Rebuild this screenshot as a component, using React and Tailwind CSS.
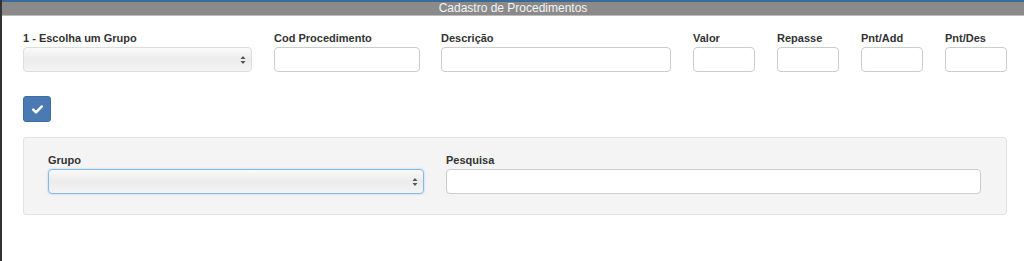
import React from 'react';

const Field = ({ label, width, select }) => (
  <div className="flex flex-col">
    <label className={`${width} text-[11px] font-bold text-[#333] leading-none mb-[3px] h-[11px]`}>{label}</label>
    {select ? <SelectBox className={width} /> : <div className={`${width} h-[25px] bg-white border border-[#ccc] rounded-[4px]`} />}
  </div>
);

const SelectBox = ({ className, focus }) => (
  <div
    className={`${className} h-[25px] rounded-[4px] border ${focus ? 'border-[#8ab8e6] shadow-[0_0_2px_rgba(102,175,233,0.6)]' : 'border-[#ddd]'} bg-gradient-to-b from-[#fafafa] via-[#ececec] to-[#f4f4f4] flex items-center justify-end pr-[5px]`}
  >
    <svg width="6" height="10" viewBox="0 0 6 10">
      <path d="M3 1 L5.5 4 H0.5 Z" fill="#555" />
      <path d="M3 9 L5.5 6 H0.5 Z" fill="#555" />
    </svg>
  </div>
);

export default function App() {
  return (
    <div className="w-[1024px] h-[261px] bg-white border-l-2 border-[#333] font-['Liberation_Sans',Arial,sans-serif] overflow-hidden">
      {/* barra de título */}
      <div className="h-[2px] bg-[#3b6a98]" />
      <div className="h-[14px] bg-[#8a8a8a] border-b border-[#bdbdbd] text-[12px] leading-[13px] text-[#f4f4f4] text-center">
        Cadastro de Procedimentos
      </div>

      <div className="pl-[21px] pt-[17px]">
        <div className="flex gap-[22px]">
          <Field label="1 - Escolha um Grupo" width="w-[229px]" select />
          <Field label="Cod Procedimento" width="w-[146px]" />
          <div className="ml-[-1px]">
            <Field label="Descrição" width="w-[230px]" />
          </div>
          <Field label="Valor" width="w-[62px]" />
          <Field label="Repasse" width="w-[62px]" />
          <Field label="Pnt/Add" width="w-[62px]" />
          <Field label="Pnt/Des" width="w-[62px]" />
        </div>

        <button className="mt-[24px] w-[28px] h-[26px] rounded-[3px] bg-[#4a79b4] border border-[#3f6ba3] flex items-center justify-center">
          <svg width="11" height="9" viewBox="0 0 11 9">
            <path d="M1.2 4.6 L4 7.4 L9.8 1.4" stroke="white" strokeWidth="2.4" fill="none" strokeLinecap="round" strokeLinejoin="round" />
          </svg>
        </button>

        <div className="mt-[15px] w-[984px] h-[78px] bg-[#f4f4f4] border border-[#e2e2e2] rounded-[3px] flex gap-[22px] pl-[24px] pt-[17px]">
          <div className="flex flex-col">
            <label className="text-[11px] font-bold text-[#333] leading-none mb-[3px] h-[11px]">Grupo</label>
            <SelectBox className="w-[376px]" focus />
          </div>
          <div className="flex flex-col">
            <label className="text-[11px] font-bold text-[#333] leading-none mb-[3px] h-[11px]">Pesquisa</label>
            <div className="w-[535px] h-[25px] bg-white border border-[#ccc] rounded-[4px]" />
          </div>
        </div>
      </div>
    </div>
  );
}
